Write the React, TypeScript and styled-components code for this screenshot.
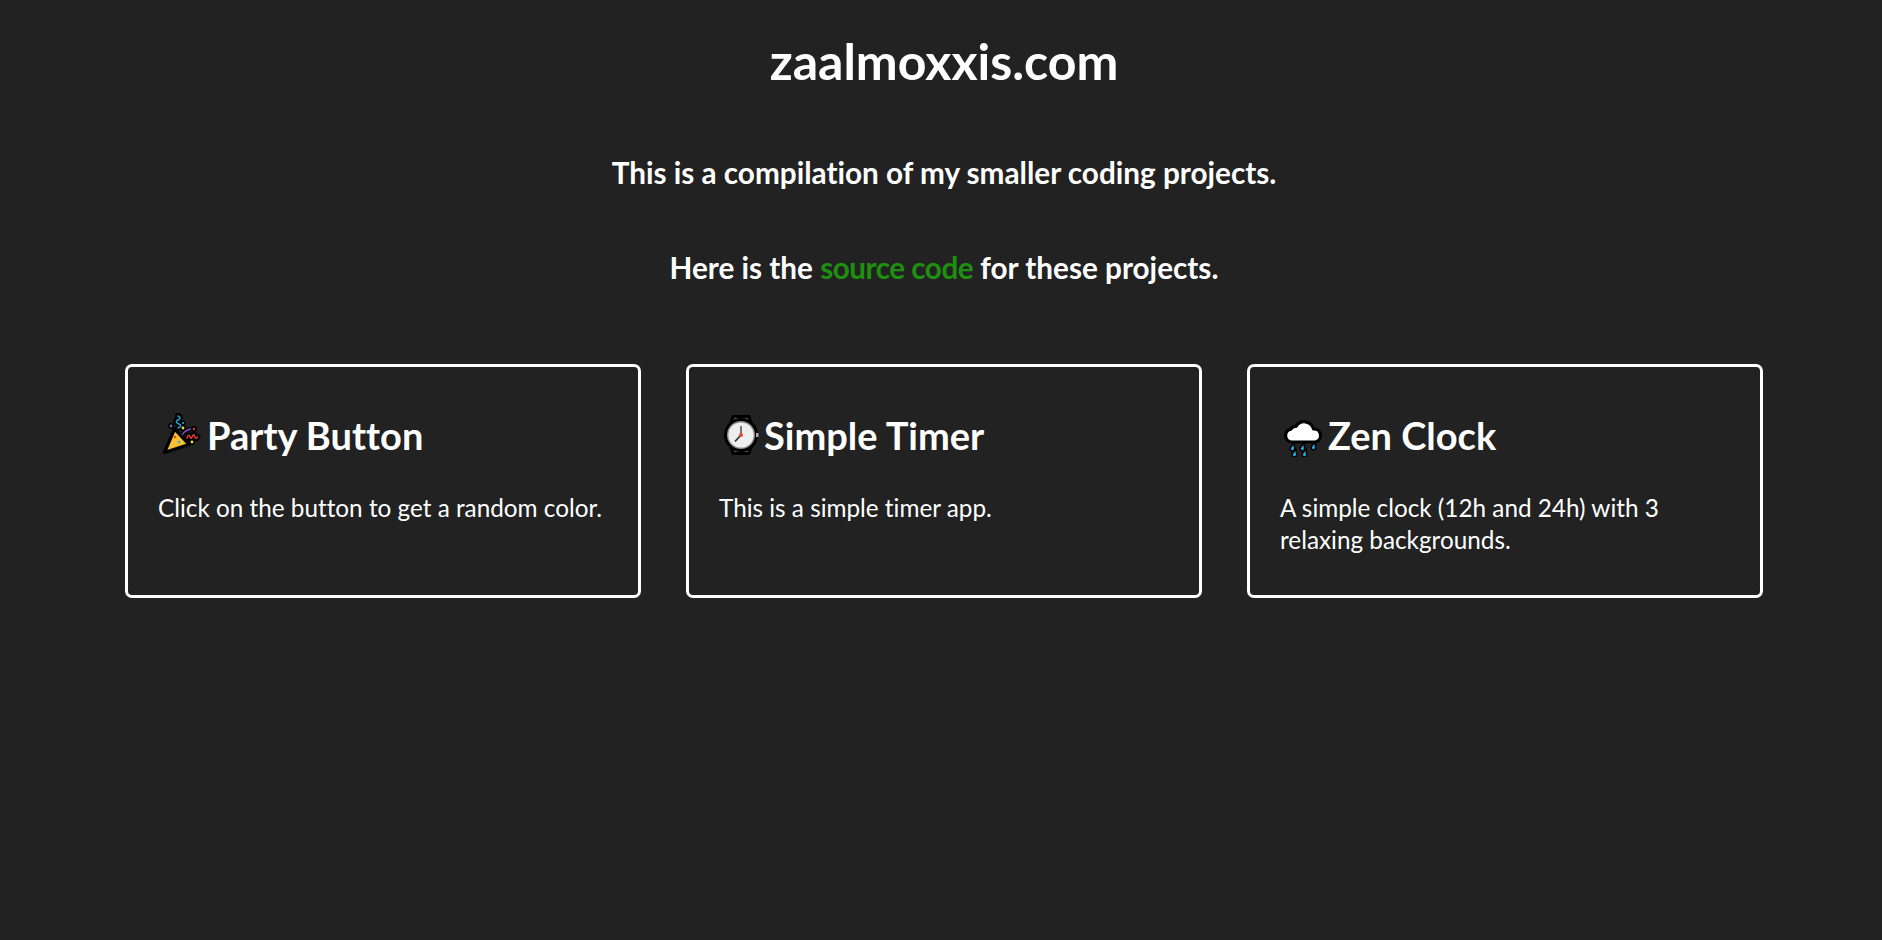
import React from "react";
import styled, { createGlobalStyle } from "styled-components";

const Global = createGlobalStyle`
  html, body { margin: 0; padding: 0; background: #222222; }
  body {
    font-family: "Lato", "Noto Sans", sans-serif;
    font-variant-ligatures: none;
    color: #fff;
  }
`;

const Page = styled.main`
  min-height: 940px;
  box-sizing: border-box;
  padding: 34px 119px 0 125px;
  display: flex;
  flex-direction: column;
  align-items: center;
`;

const Title = styled.h1`
  margin: 0 0 70px;
  font-size: 50px;
  line-height: 54px;
  font-weight: 700;
`;

const Intro = styled.p`
  margin: 0 0 65px;
  font-size: 29.7px;
  line-height: 30px;
  font-weight: 700;
`;

const SourceLink = styled.a`
  color: #1f8f0f;
  letter-spacing: -0.5px;
  text-decoration: none;
`;

const Cards = styled.section`
  align-self: stretch;
  margin-top: 16px;
  display: grid;
  grid-template-columns: repeat(3, 516px);
  justify-content: space-between;
`;

const Card = styled.article`
  box-sizing: border-box;
  height: 234px;
  padding: 46px 30px 0;
  border: 3px solid #fff;
  border-radius: 7px;
`;

const CardTitle = styled.h2<{ $gap: number }>`
  margin: 0 0 35px;
  display: flex;
  align-items: center;
  gap: ${(p) => p.$gap}px;
  font-size: 38px;
  line-height: 44px;
  font-weight: 700;
`;

const EmojiIcon = styled.svg`
  width: 44px;
  height: 44px;
  flex: none;
`;

const CardText = styled.p`
  margin: 0;
  font-size: 24.3px;
  line-height: 32.4px;
  font-weight: 400;
`;

const Party = () => (
  <EmojiIcon viewBox="-1 0 44 44" aria-hidden="true">
    <path d="M19 3 q4 2 0 4 q-4 2 1 4 q4 2 -1 4" fill="none" stroke="#000" strokeWidth="6" strokeLinecap="round" />
    <path d="M28 25 q1.5 -5 3 -1 q1 3 2.5 -1 q1.5 -3 2.5 1 q1 3 2.5 0" fill="none" stroke="#000" strokeWidth="6" strokeLinecap="round" />
    <path d="M23 22 q3 -5 9 -6" fill="none" stroke="#000" strokeWidth="4" />
    <circle cx="12" cy="13" r="3" fill="#000" />
    <circle cx="24" cy="15" r="3" fill="#000" />
    <circle cx="24" cy="10" r="2.6" fill="#000" />
    <circle cx="35" cy="16" r="3" fill="#000" />
    <circle cx="33" cy="29" r="3" fill="#000" />
    <path d="M5.5 39.5 L15.5 16 L30 31.5 Z" fill="#fbc02d" stroke="#000" strokeWidth="3.2" strokeLinejoin="round" />
    <circle cx="16" cy="24" r="1.3" fill="#e64a19" />
    <circle cx="20" cy="29" r="1.3" fill="#29b6f6" />
    <path d="M28 25 q1.5 -5 3 -1 q1 3 2.5 -1 q1.5 -3 2.5 1 q1 3 2.5 0" fill="none" stroke="#e53935" strokeWidth="1.5" strokeLinecap="round" />
    <path d="M23 22 q3 -5 9 -6" fill="none" stroke="#7e57c2" strokeWidth="1.4" />
    <path d="M19 3 q4 2 0 4 q-4 2 1 4 q4 2 -1 4" fill="none" stroke="#1e9fd8" strokeWidth="1.5" strokeLinecap="round" />
    <circle cx="12" cy="13" r="1.4" fill="#7e57c2" />
    <circle cx="24" cy="15" r="1.4" fill="#fdd835" />
    <circle cx="24" cy="10" r="1" fill="#29b6f6" />
    <circle cx="35" cy="16" r="1.2" fill="#e53935" />
    <circle cx="33" cy="29" r="1.4" fill="#fdd835" />
  </EmojiIcon>
);

const Watch = () => (
  <EmojiIcon viewBox="0 0 44 44" aria-hidden="true">
    <path d="M12 10 L14 3.5 H30 L32 10 V34 L30 40.5 H14 L12 34 Z" fill="#5a5a5a" stroke="#000" strokeWidth="3" strokeLinejoin="round" />
    <circle cx="22" cy="22" r="15.5" fill="#8e8e8e" stroke="#000" strokeWidth="3" />
    <rect x="37" y="20" width="2.4" height="4" fill="#b0b0b0" />
    <circle cx="22" cy="22" r="12.6" fill="#eeeeee" />
    <path d="M22 22 V13" stroke="#333" strokeWidth="1.3" />
    <path d="M22 22 L16 28.5" stroke="#333" strokeWidth="1.8" />
    <circle cx="22" cy="22" r="2" fill="#f44336" />
  </EmojiIcon>
);

const drops: [number, number][] = [[12, 33], [22, 33], [33, 32], [14, 39], [24, 39]];

const Rain = () => (
  <EmojiIcon viewBox="0 0 44 44" aria-hidden="true">
    {drops.map(([x, y]) => (
      <path
        key={`${x}-${y}`}
        d={`M${x + 2} ${y - 3} l-3.2 4 a2.3 2.3 0 1 0 3.8 0.8 Z`}
        fill="#1cb0ea"
        stroke="#000"
        strokeWidth="1.6"
        strokeLinejoin="round"
      />
    ))}
    <path
      d="M12 29 a6.5 6.5 0 0 1 -1 -12.9 a5 5 0 0 1 5 -2.6 a9.5 9.5 0 0 1 17.5 2.5 a6.6 6.6 0 0 1 2 13 Z"
      fill="#fff"
      stroke="#000"
      strokeWidth="3.2"
      strokeLinejoin="round"
    />
  </EmojiIcon>
);

const projects = [
  { icon: <Party />, gap: 5, title: "Party Button", text: "Click on the button to get a random color." },
  { icon: <Watch />, gap: 1, title: "Simple Timer", text: "This is a simple timer app." },
  { icon: <Rain />, gap: 4, title: "Zen Clock", text: "A simple clock (12h and 24h) with 3 relaxing backgrounds." },
];

export default function App() {
  return (
    <Page>
      <Global />
      <Title>zaalmoxxis.com</Title>
      <Intro>This is a compilation of my smaller coding projects.</Intro>
      <Intro>
        Here is the <SourceLink href="#">source code</SourceLink> for these projects.
      </Intro>
      <Cards>
        {projects.map((p) => (
          <Card key={p.title}>
            <CardTitle $gap={p.gap}>{p.icon}{p.title}</CardTitle>
            <CardText>{p.text}</CardText>
          </Card>
        ))}
      </Cards>
    </Page>
  );
}
